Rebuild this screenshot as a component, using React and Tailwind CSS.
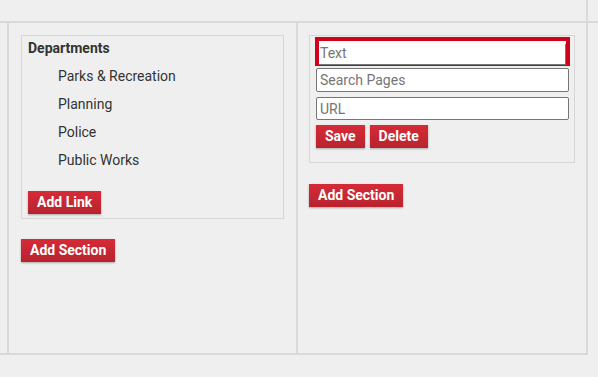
import React from "react";

function RedButton({ children, className = "" }) {
  return (
    <button
      type="button"
      className={
        "h-[23px] px-[9px] bg-linear-to-b from-[#d52b37] to-[#b8232e] text-white font-bold text-[14px] leading-[23px] shadow-[0_1px_2px_rgba(0,0,0,0.3)] " +
        className
      }
    >
      {children}
    </button>
  );
}

export default function App() {
  const links = ["Parks & Recreation", "Planning", "Police", "Public Works"];
  return (
    <div className="w-[598px] h-[377px] bg-[#efefef] font-['Roboto',sans-serif] text-[#333333] overflow-hidden">
      <div className="h-[23px] border-b-2 border-[#d9d9d9]">
        <div className="w-[588px] h-full border-r-2 border-[#d9d9d9]" />
      </div>
      <div className="w-[588px] h-[332px] border-b-2 border-r-2 border-[#d9d9d9] pl-[7px] flex">
        {/* Left cell */}
        <div className="w-[291px] border-l-2 border-r-2 border-[#d9d9d9] p-[12px]">
          <div className="border border-[#d6d6d6] px-[6px] pb-[4px]">
            <div className="font-bold text-[14px] leading-[24px]">Departments</div>
            <div className="mt-[2px] pl-[30px]">
              {links.map((l) => (
                <div key={l} className="text-[14px] leading-[28px]">
                  {l}
                </div>
              ))}
            </div>
            <div className="mt-[17px] flex">
              <RedButton>Add Link</RedButton>
            </div>
          </div>
          <div className="mt-[20px] flex">
            <RedButton>Add Section</RedButton>
          </div>
        </div>
        {/* Right cell */}
        <div className="flex-1 px-[11px] pt-[12px]">
          <div className="border border-[#d6d6d6] pl-[6px] pr-[5px] pt-[1px] pb-[14px]">
            <div className="-mx-[1px] h-[29px] border-4 border-[#d0021b] bg-white">
              <input
                readOnly
                placeholder="Text"
                className="w-full h-full bg-white border-r border-b border-[#767676] pl-[1px] pb-[2px] text-[14px] outline-none placeholder:text-[#757575]"
              />
            </div>
            <input
              readOnly
              placeholder="Search Pages"
              className="block mt-[2px] w-full h-[24px] bg-white border border-[#767676] rounded-[2px] pl-[3px] text-[14px] outline-none placeholder:text-[#757575]"
            />
            <input
              readOnly
              placeholder="URL"
              className="block mt-[5px] w-full h-[23px] bg-white border border-[#767676] rounded-[2px] pl-[3px] text-[14px] outline-none placeholder:text-[#757575]"
            />
            <div className="mt-[5px] flex gap-[5px]">
              <RedButton>Save</RedButton>
              <RedButton>Delete</RedButton>
            </div>
          </div>
          <div className="mt-[21px] flex">
            <RedButton>Add Section</RedButton>
          </div>
        </div>
      </div>
    </div>
  );
}
